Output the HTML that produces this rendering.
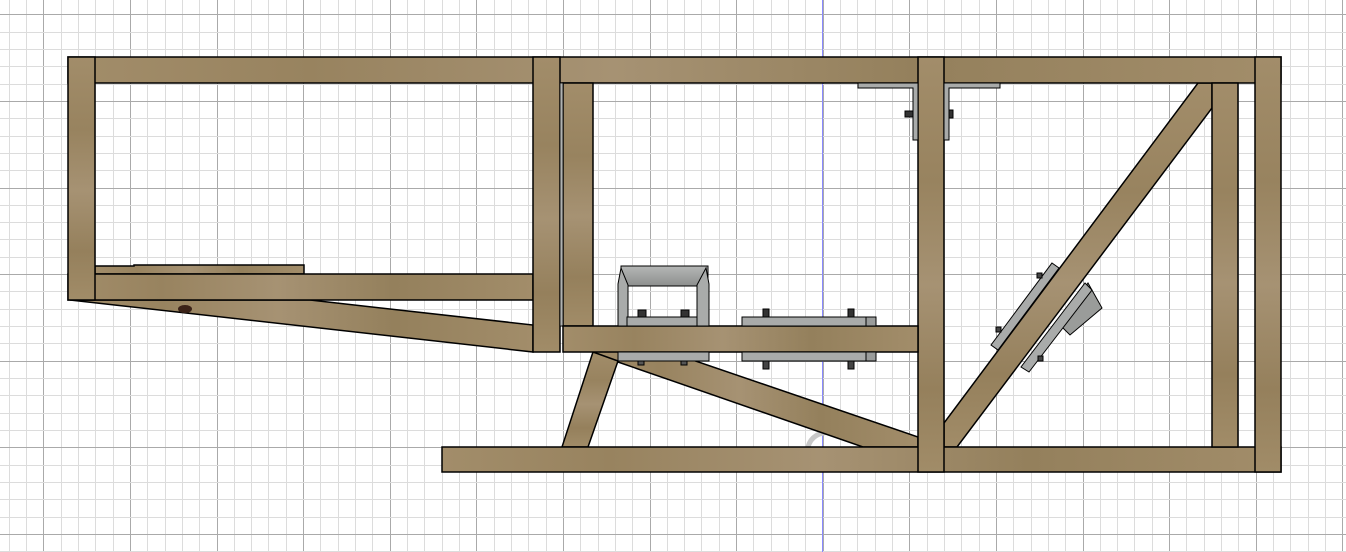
<!DOCTYPE html>
<html><head><meta charset="utf-8"><style>html,body{margin:0;padding:0;background:#fff;overflow:hidden}svg{display:block}</style></head>
<body>
<svg id="s" width="1346" height="552" viewBox="0 0 1346 552" xmlns="http://www.w3.org/2000/svg">
<defs>
<linearGradient id="wh" x1="0" y1="0" x2="1" y2="0">
<stop offset="0" stop-color="#a28d6a"/><stop offset="0.2" stop-color="#98835f"/><stop offset="0.45" stop-color="#a69273"/><stop offset="0.7" stop-color="#94805c"/><stop offset="1" stop-color="#a28d6a"/>
</linearGradient>
<linearGradient id="wv" x1="0" y1="0" x2="0" y2="1">
<stop offset="0" stop-color="#a28d6a"/><stop offset="0.3" stop-color="#98835f"/><stop offset="0.55" stop-color="#a69273"/><stop offset="0.8" stop-color="#95805c"/><stop offset="1" stop-color="#a18c68"/>
</linearGradient>
<linearGradient id="roll" x1="0" y1="0" x2="0" y2="1">
<stop offset="0" stop-color="#b5b7b6"/><stop offset="1" stop-color="#8d8f8e"/>
</linearGradient>
</defs>
<rect width="1346" height="552" fill="#fff"/>
<g id="grid"></g>
<line x1="822.5" y1="0" x2="822.5" y2="552" stroke="#8a8aff" stroke-width="1"/>
<path d="M808 447 Q812 432 832 432" stroke="#c8c8c8" stroke-width="5" fill="none"/>

<g stroke="#000" stroke-width="1.5" stroke-linejoin="miter">
<polygon points="70,300 310,300 533,325 533,352" fill="url(#wh)"/>
<polygon points="95,266 134,266 134,265 304,265 304,274 95,274" fill="url(#wh)"/>
<rect x="68" y="274" width="465" height="26" fill="url(#wh)"/>
<polygon points="593,326 918,437 918,447 863,447 618,362 593,352" fill="url(#wh)"/>
<polygon points="593,352 618,361 588,447 562,447" fill="url(#wv)"/>
<polygon points="1198,83 1212,83 1212,108 957,447 944,447 944,423" fill="url(#wv)"/>
<rect x="442" y="447" width="839" height="25" fill="url(#wh)"/>
<rect x="68" y="57" width="1213" height="26" fill="url(#wh)"/>
<rect x="68" y="57" width="27" height="243" fill="url(#wv)"/>
<rect x="533" y="57" width="27" height="295" fill="url(#wv)"/>
<rect x="563" y="83" width="30" height="243" fill="url(#wv)"/>
<rect x="560" y="83" width="3" height="243" fill="#b0b2b1" stroke-width="0.8"/>
<rect x="918" y="57" width="26" height="415" fill="url(#wv)"/>
<rect x="1212" y="83" width="26" height="364" fill="url(#wv)"/>
<rect x="1255" y="57" width="26" height="415" fill="url(#wv)"/>
<rect x="563" y="326" width="355" height="26" fill="url(#wh)"/>
</g>

<g stroke="#000" stroke-width="1" fill="#a9abaa">
<rect x="618" y="352" width="91" height="9"/>
<rect x="621" y="266" width="87" height="20" fill="url(#roll)"/>
<path d="M618 284 L621 268 L628 285 L628 326 L618 326 Z"/>
<path d="M709 284 L706 268 L697 285 L697 326 L709 326 Z"/>
<rect x="627" y="317" width="70" height="9"/>
<rect x="638" y="310" width="8" height="7" fill="#333"/>
<rect x="681" y="310" width="8" height="7" fill="#333"/>
<rect x="638" y="361" width="6" height="4" fill="#555"/>
<rect x="681" y="361" width="6" height="4" fill="#555"/>
<rect x="742" y="317" width="134" height="9"/>
<rect x="742" y="352" width="134" height="9"/>
<rect x="866" y="317" width="10" height="9" fill="#9a9c9b"/>
<rect x="866" y="352" width="10" height="9" fill="#9a9c9b"/>
<rect x="763" y="309" width="6" height="8" fill="#333"/>
<rect x="848" y="309" width="6" height="8" fill="#333"/>
<rect x="763" y="361" width="6" height="8" fill="#444"/>
<rect x="848" y="361" width="6" height="8" fill="#444"/>
<path d="M858 83 H918 V140 H913 V88 H858 Z"/>
<path d="M944 83 H1000 V88 H949 V140 H944 Z"/>
<rect x="905" y="111" width="8" height="6" fill="#333"/>
<rect x="949" y="110" width="4" height="8" fill="#333"/>
<polygon points="1088,283 1102,308 1070,335 1060,325" fill="#9a9c9a"/>
<polygon points="1052,263 1059,268 998,350 991,345"/>
<polygon points="1085,283 1092,290 1029,372 1021,367"/>
<rect x="1038" y="356" width="5" height="5" fill="#444"/>
<rect x="996" y="327" width="5" height="5" fill="#444"/>
<rect x="1037" y="273" width="5" height="5" fill="#444"/>
</g>
<ellipse cx="185" cy="309" rx="7" ry="4" fill="#3b2218"/>
</svg>
<script>
(function(){
var g=document.getElementById('grid'),ns='http://www.w3.org/2000/svg',s=17.32,h='';
for(var i=-3;i<80;i++){var x=43.3+i*s;if(x<0||x>1346)continue;var m=(i%5===0);
h+='<line x1="'+(Math.round(x)+0.5)+'" y1="0" x2="'+(Math.round(x)+0.5)+'" y2="552" stroke="'+(m?'#aaaaaa':'#dcdcdc')+'"/>';}
for(var j=-3;j<40;j++){var y=14.3+j*s;if(y<0||y>552)continue;var m2=(j%5===0);
h+='<line x1="0" y1="'+(Math.round(y)+0.5)+'" x2="1346" y2="'+(Math.round(y)+0.5)+'" stroke="'+(m2?'#aaaaaa':'#dcdcdc')+'"/>';}
g.innerHTML=h;
})();
</script>
</body></html>
